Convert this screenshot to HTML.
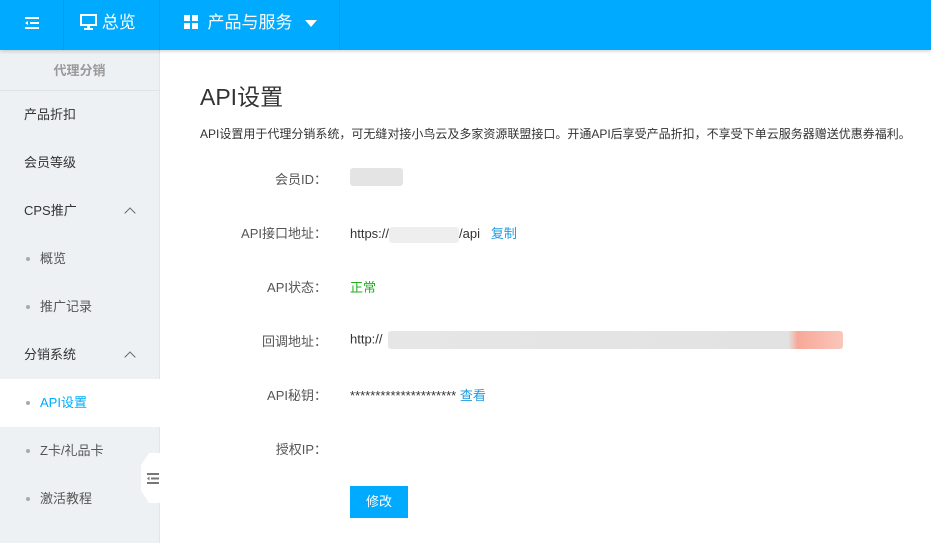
<!DOCTYPE html>
<html><head><meta charset="utf-8"><style>
*{margin:0;padding:0;box-sizing:border-box}
body{width:931px;height:543px;overflow:hidden;background:#fff;font-family:"Liberation Sans","Noto Sans CJK SC",sans-serif;position:relative;font-size:13px;color:#333}
.top{position:absolute;left:0;top:0;width:931px;height:50px;background:#00aaff;box-shadow:0 1px 4px rgba(0,0,0,.2);z-index:2}
.top .c{position:absolute;top:0;height:50px;border-right:1px solid #0d9be0;color:#fff;font-size:17px;line-height:46px}
.side{position:absolute;left:0;top:50px;width:160px;height:493px;background:#eef1f4;border-right:1px solid #e1e4e8}
.side .h{height:41px;line-height:41px;text-align:center;color:#999;font-weight:bold;font-size:13px;border-bottom:1px solid #dfe3e7}
.it{position:absolute;left:0;width:160px;height:48px;line-height:48px;padding-left:24px;font-size:13px;color:#333}
.sub{padding-left:40px;color:#555}
.sub:before{content:"";position:absolute;left:26px;top:22px;width:4px;height:4px;border-radius:2px;background:#aaa}
.act{background:#fff;color:#00aaff}
.chev{position:absolute;right:26px;top:22px;width:8px;height:8px;border-left:1.5px solid #666;border-top:1.5px solid #666;transform:rotate(45deg)}
.lab{position:absolute;width:130px;text-align:right;left:197px;color:#555}
.val{position:absolute;left:350px;color:#333}
.blur{display:inline-block;vertical-align:middle;background:#e4e4e4;border-radius:3px}
</style></head><body>
<div class="top">
 <div class="c" style="left:0;width:64px;text-align:center">
  <svg width="14" height="12" style="margin-top:17px" viewBox="0 0 14 12"><rect x="0" y="0" width="14" height="2" fill="#fff"/><rect x="5" y="5" width="9" height="2" fill="#fff"/><rect x="0" y="10" width="14" height="2" fill="#fff"/><path d="M0 6 L3 4 L3 8Z" fill="#fff"/></svg>
 </div>
 <div class="c" style="left:64px;width:96px;padding-left:16px">
  <svg width="17" height="16" style="vertical-align:-2px" viewBox="0 0 17 16"><rect x="1" y="1" width="15" height="10" fill="none" stroke="#fff" stroke-width="2"/><rect x="7" y="11" width="3" height="3" fill="#fff"/><rect x="4" y="14" width="9" height="2" fill="#fff"/></svg> 总览</div>
 <div class="c" style="left:160px;width:180px;padding-left:24px">
  <svg width="14" height="14" style="vertical-align:-1px" viewBox="0 0 14 14"><rect x="0" y="0" width="6" height="6" fill="#fff"/><rect x="8" y="0" width="6" height="6" fill="#fff"/><rect x="0" y="8" width="6" height="6" fill="#fff"/><rect x="8" y="8" width="6" height="6" fill="#fff"/></svg>&nbsp; 产品与服务
  <svg width="12" height="8" style="margin-left:8px" viewBox="0 0 12 8"><path d="M0 0H12L6 7Z" fill="#fff"/></svg></div>
</div>
<div class="side">
 <div class="h">代理分销</div>
 <div class="it" style="top:41px">产品折扣</div>
 <div class="it" style="top:89px">会员等级</div>
 <div class="it" style="top:137px">CPS推广<span class="chev"></span></div>
 <div class="it sub" style="top:185px">概览</div>
 <div class="it sub" style="top:233px">推广记录</div>
 <div class="it" style="top:281px">分销系统<span class="chev"></span></div>
 <div class="it sub act" style="top:329px">API设置</div>
 <div class="it sub" style="top:377px">Z卡/礼品卡</div>
 <div class="it sub" style="top:425px">激活教程</div>
</div>
<div style="position:absolute;left:141px;top:453px;width:20px;height:50px;background:#fff;clip-path:polygon(40% 0,100% 0,100% 100%,40% 100%,0 75%,0 25%)"></div>
<svg style="position:absolute;left:147px;top:473px" width="12" height="11" viewBox="0 0 12 11"><rect x="0" y="0" width="12" height="2" fill="#777"/><rect x="4" y="4.5" width="8" height="2" fill="#777"/><rect x="0" y="9" width="12" height="2" fill="#777"/><path d="M0 5.5L2.5 3.5V7.5Z" fill="#777"/></svg>
<div style="position:absolute;left:200px;top:78px;font-size:23px;color:#333">API设置</div>
<div style="position:absolute;left:200px;top:125px;font-size:12px;color:#333;white-space:nowrap">API设置用于代理分销系统，可无缝对接小鸟云及多家资源联盟接口。开通API后享受产品折扣，不享受下单云服务器赠送优惠券福利。</div>
<div class="lab" style="top:169px">会员ID：</div><div class="val" style="top:169px"><span class="blur" style="width:53px;height:18px;margin-top:-2px"></span></div>
<div class="lab" style="top:223px">API接口地址：</div><div class="val" style="top:223px">https://<span class="blur" style="width:70px;height:16px;background:#eee"></span>/api &nbsp; <span style="color:#1e9be0">复制</span></div>
<div class="lab" style="top:277px">API状态：</div><div class="val" style="top:277px;color:#1fae1f">正常</div>
<div class="lab" style="top:331px">回调地址：</div><div class="val" style="top:331px">http://<span class="blur" style="margin-left:5px;width:455px;height:18px;background:linear-gradient(90deg,#e6e6e6 0,#e2e2e2 88%,#f7a898 90%,#fbc6bb 100%)"></span></div>
<div class="lab" style="top:385px">API秘钥：</div><div class="val" style="top:385px">********************* <span style="color:#1e9be0">查看</span></div>
<div class="lab" style="top:439px">授权IP：</div>
<div style="position:absolute;left:350px;top:486px;width:58px;height:32px;background:#00aaff;color:#fff;text-align:center;line-height:32px;font-size:13px">修改</div>
</body></html>
